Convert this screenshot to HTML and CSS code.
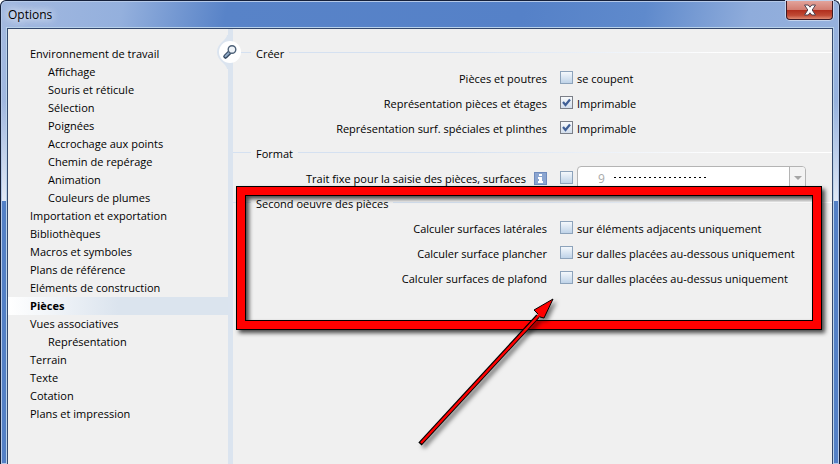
FILE: index.html
```html
<!DOCTYPE html>
<html lang="fr">
<head>
  <meta charset="UTF-8">
  <meta name="viewport" content="width=device-width, initial-scale=1.0">
  <title>Options</title>
  <link rel="stylesheet" href="styles.css">
</head>
<body>
<div class="window">
  <header class="titlebar">
    <h1 class="title">Options</h1>
    <button class="close" type="button" aria-label="Fermer">
      <svg width="14" height="12" viewBox="0 0 14 12">
        <path d="M1.500 1h3.700L7 3.200 8.800 1h3.700L9.200 6l3.300 5H8.800L7 8.800 5.200 11H1.500l3.300-5z" fill="#fff" stroke="#51424f" stroke-width="1"/>
      </svg>
    </button>
  </header>

  <div class="client">
    <nav class="sidebar">
      <ul class="tree">
        <li><a href="#">Environnement de travail</a></li>
        <li><a href="#" class="sub">Affichage</a></li>
        <li><a href="#" class="sub">Souris et réticule</a></li>
        <li><a href="#" class="sub">Sélection</a></li>
        <li><a href="#" class="sub">Poignées</a></li>
        <li><a href="#" class="sub">Accrochage aux points</a></li>
        <li><a href="#" class="sub">Chemin de repérage</a></li>
        <li><a href="#" class="sub">Animation</a></li>
        <li><a href="#" class="sub">Couleurs de plumes</a></li>
        <li><a href="#">Importation et exportation</a></li>
        <li><a href="#">Bibliothèques</a></li>
        <li><a href="#">Macros et symboles</a></li>
        <li><a href="#">Plans de référence</a></li>
        <li><a href="#">Eléments de construction</a></li>
        <li><a href="#" class="active">Pièces</a></li>
        <li><a href="#">Vues associatives</a></li>
        <li><a href="#" class="sub">Représentation</a></li>
        <li><a href="#">Terrain</a></li>
        <li><a href="#">Texte</a></li>
        <li><a href="#">Cotation</a></li>
        <li><a href="#">Plans et impression</a></li>
      </ul>
      <button class="search" type="button" aria-label="Rechercher">
        <svg width="34" height="34" viewBox="0 0 34 34">
          <path d="M11 0h5v34h-5C11 29 1 26 1 17S11 5 11 0z" fill="#dbe4ef"/>
          <circle cx="14" cy="17" r="11" fill="#fff"/>
          <path d="M9.500 21.500l4-4" stroke="#33475f" stroke-width="4.500" stroke-linecap="round"/>
          <path d="M9.500 21.300l3.500-3.500" stroke="#8fa9c6" stroke-width="2" stroke-linecap="round"/>
          <circle cx="16" cy="14.500" r="3.800" fill="#eef3f8" stroke="#4d6178" stroke-width="1.400"/>
        </svg>
      </button>
    </nav>

    <main class="panel">
      <h2 class="section">Créer</h2>
      <div class="row">
        <span class="caption">Pièces et poutres</span>
        <label class="check"><input type="checkbox">se coupent</label>
      </div>
      <div class="row">
        <span class="caption">Représentation pièces et étages</span>
        <label class="check"><input type="checkbox" checked>Imprimable</label>
      </div>
      <div class="row">
        <span class="caption">Représentation surf. spéciales et plinthes</span>
        <label class="check"><input type="checkbox" checked>Imprimable</label>
      </div>

      <h2 class="section">Format</h2>
      <div class="row">
        <label class="caption" for="trait">Trait fixe pour la saisie des pièces, surfaces
          <svg class="info" width="13" height="13" viewBox="0 0 13 13">
            <rect x=".5" y=".5" width="12" height="12" fill="#8ba5d0" stroke="#6f8bbd"/>
            <path d="M5 2h3v2H5zM4 5h4v4h1v2H4V9h1V7H4z" fill="#fff"/>
          </svg>
        </label>
        <div class="check">
          <input type="checkbox" id="trait">
          <div class="pen">
            <select class="pen-select" aria-label="Plume" disabled><option>9</option></select>
            <span class="pen-line"></span>
            <span class="pen-arrow"></span>
          </div>
        </div>
      </div>

      <div class="group">
        <h2 class="section">Second oeuvre des pièces</h2>
        <div class="row">
          <span class="caption">Calculer surfaces latérales</span>
          <label class="check"><input type="checkbox">sur éléments adjacents uniquement</label>
        </div>
        <div class="row">
          <span class="caption">Calculer surface plancher</span>
          <label class="check"><input type="checkbox">sur dalles placées au-dessous uniquement</label>
        </div>
        <div class="row">
          <span class="caption">Calculer surfaces de plafond</span>
          <label class="check"><input type="checkbox">sur dalles placées au-dessus uniquement</label>
        </div>
        <div class="highlight"></div>
        <svg class="arrow" width="150" height="160" viewBox="0 0 150 160">
          <path d="M8 151L126 23" stroke="#000" stroke-width="4.500"/>
          <path d="M141 6L122 17l4 4 2 3 4 1z" fill="#f00" stroke="#000" stroke-linejoin="round"/>
          <path d="M9 150L129 20" stroke="#f00" stroke-width="2.500"/>
        </svg>
      </div>
    </main>
  </div>
</div>
</body>
</html>
```
FILE: styles.css
```css
* { box-sizing: border-box; }
body {
  margin: 0;
  font-family: "Open Sans", "Noto Sans", sans-serif;
  font-size: 11px;
  line-height: 18px;
  color: #000;
}
h1, h2 { margin: 0; font-size: 11px; font-weight: normal; }
button { padding: 0; border: 0; background: none; }
svg { display: block; }

/* window frame */
.window {
  display: flex;
  flex-direction: column;
  min-height: 100vh;
  padding: 0 6px;
  border: solid #15203a;
  border-width: 1px 1px 0 1px;
  border-radius: 6px 6px 0 0;
  background:
    linear-gradient(transparent 50%, rgba(255, 255, 255, .7)) top / 100% 200px no-repeat,
    linear-gradient(100deg, #a3b9e0 0, #94b0dd 14%, #5883c8 26%, #5581c8 60%, #5f8acc 74%, #8facdb 86%, #98b3de) top / 100% 200px no-repeat,
    #5380c6;
  box-shadow: inset 0 0 0 1px #b5c9e8;
}
.titlebar {
  display: flex;
  justify-content: space-between;
  align-items: flex-start;
  height: 27px;
}
.title {
  padding: 5px 1px 0;
  font-size: 12px;
  text-shadow: 0 0 8px #fff, 0 0 8px #fff;
}
.close {
  display: flex;
  justify-content: center;
  align-items: center;
  width: 47px;
  height: 19px;
  border: 1px solid #3c1a25;
  border-top: 0;
  border-radius: 0 0 4px 4px;
  background: linear-gradient(#e2a39b 0, #d37e72 48%, #b02d1c 50%, #c04a35 80%, #df8a72);
  box-shadow: 0 0 0 1px #c4d3ec;
}

/* content */
.client {
  display: flex;
  flex: 1;
  border: 1px solid #33486d;
  border-bottom: 0;
  background: #f0f0f0;
  box-shadow: 0 0 0 1px #b9d2ea;
}
.sidebar {
  position: relative;
  width: 225px;
  padding-top: 16px;
  border-right: 5px solid #dbe4ef;
}
.tree { margin: 0; padding: 0; list-style: none; }
.tree a {
  display: block;
  padding-left: 22px;
  color: inherit;
  text-decoration: none;
}
.tree .sub { padding-left: 40px; }
.tree .active {
  font-weight: bold;
  background: linear-gradient(90deg, #fff, #dbe4ee 50%);
}
.search { position: absolute; top: 6px; right: -22px; }

.panel { flex: 1; padding-top: 12px; }
.section {
  display: flex;
  align-items: center;
  gap: 5px;
  height: 25px;
}
.section::before,
.section::after {
  content: "";
  height: 1px;
  margin-bottom: 3px;
  background: #d5e1f1;
}
.section::before { width: 18px; }
.section::after { flex: 1; background: linear-gradient(90deg, #d5e1f1 30%, #fff 80%); }
.row {
  display: grid;
  grid-template-columns: 314px 1fr;
  column-gap: 13px;
  align-items: center;
  height: 25px;
}
.caption {
  display: flex;
  justify-content: flex-end;
  align-items: center;
  gap: 8px;
  white-space: nowrap;
}
.check {
  display: flex;
  align-items: center;
  gap: 4px;
  white-space: nowrap;
}
.check input {
  appearance: none;
  flex: none;
  width: 13px;
  height: 13px;
  margin: 0 0 2px;
  border: 1px solid #8da3bb;
  background: linear-gradient(#f4f8fc, #bfd3e8);
}
.check input:checked {
  border-color: #7b7f88;
  background: url("data:image/svg+xml,%3Csvg xmlns='http://www.w3.org/2000/svg' viewBox='0 0 11 11'%3E%3Cpath d='M2 5l2.500 3L9 2.500' fill='none' stroke='%23405f96' stroke-width='2.200'/%3E%3C/svg%3E"), linear-gradient(#f8fafc, #d3deec);
}

/* pen drop-down */
.pen { position: relative; width: 229px; }
.pen-select {
  appearance: none;
  display: block;
  width: 100%;
  height: 25px;
  padding: 0 20px;
  border: 1px solid #b4b4b4;
  border-radius: 4px;
  background: #fff;
  color: #aaa;
  opacity: 1;
  font: inherit;
  font-size: 12px;
}
.pen-line {
  position: absolute;
  top: 11px;
  left: 37px;
  width: 94px;
  height: 1px;
  background: repeating-linear-gradient(90deg, #000 0 2px, transparent 2px 5px);
}
.pen-arrow {
  position: absolute;
  top: 1px;
  right: 1px;
  width: 16px;
  height: 23px;
  border-left: 1px solid #b4b4b4;
  border-radius: 0 3px 3px 0;
  background: #f3f3f3;
}
.pen-arrow::after {
  content: "";
  position: absolute;
  top: 9px;
  left: 4px;
  border: 4px solid transparent;
  border-top-color: #a5a5a5;
  border-bottom: 0;
}

/* red annotation */
.group { position: relative; }
.highlight {
  position: absolute;
  top: -4px;
  right: 11px;
  bottom: -38px;
  left: 4px;
  border: 8px solid #f00;
  box-shadow: 0 0 0 1px #000, inset 0 0 0 1px #000;
  filter: drop-shadow(3px 3px 2px rgba(0, 0, 0, .7));
  pointer-events: none;
}
.arrow {
  position: absolute;
  top: 102px;
  left: 179px;
  filter: drop-shadow(3px 3px 2px rgba(0, 0, 0, .5));
  pointer-events: none;
}
```
